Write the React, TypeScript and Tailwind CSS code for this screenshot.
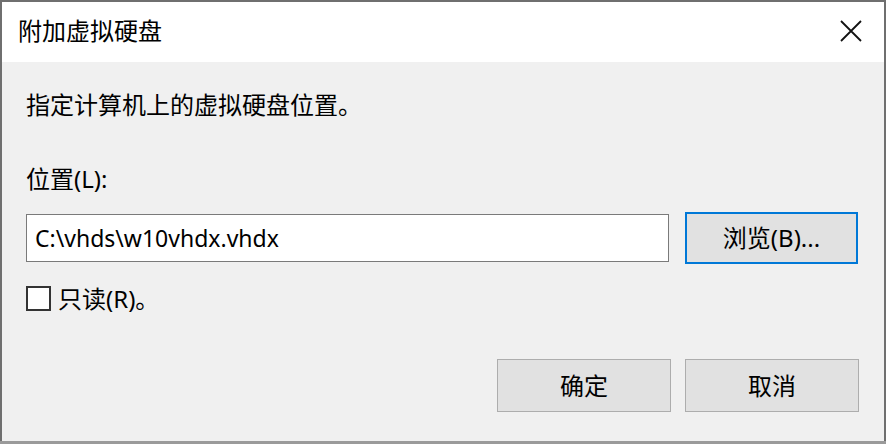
export default function App() {
  const font = { fontFamily: '"Noto Sans", "Noto Sans CJK SC", sans-serif' }
  return (
    <div className="flex h-[444px] w-[886px] flex-col overflow-hidden bg-[#6f6f6f]" style={font}>
      <div className="mx-[2px] mt-[2px] flex h-[439px] flex-col bg-[#f0f0f0] text-black">
        {/* title bar */}
        <div className="flex h-[60px] items-center justify-between bg-white pl-[16px] pr-[22px]">
          <span className="-mt-[2px] text-[24px] leading-[30px]">附加虚拟硬盘</span>
          <svg width="22" height="22" viewBox="0 0 22 22" className="-mt-[3px]">
            <path d="M1 1 L21 21 M21 1 L1 21" stroke="#111" strokeWidth="1.8" fill="none" />
          </svg>
        </div>

        {/* body */}
        <div className="flex flex-col pl-[24px] pr-[25px]">
          <p className="mt-[27px] h-[32px] text-[24px] leading-[32px]">指定计算机上的虚拟硬盘位置。</p>
          <p className="mt-[42px] h-[32px] text-[24px] leading-[32px]">位置(L):</p>

          <div className="mt-[17px] flex h-[52px] items-center gap-[16px]">
            <div className="flex h-[48px] w-[643px] items-center border border-[#7a7a7a] bg-white pl-[8px] text-[23px]">
              C:\vhds\w10vhdx.vhdx
            </div>
            <button className="flex h-[52px] w-[173px] items-center justify-center border-2 border-[#0078d7] bg-[#e1e1e1] text-[24px]">
              浏览(B)...
            </button>
          </div>

          <label className="mt-[22px] flex h-[25px] items-center gap-[7px] text-[24px]">
            <span className="h-[25px] w-[25px] border-2 border-[#333] bg-white" />
            <span className="leading-[32px]">只读(R)。</span>
          </label>

          <div className="mt-[48px] flex justify-end gap-[14px]">
            <button className="flex h-[53px] w-[174px] items-center justify-center border border-[#adadad] bg-[#e1e1e1] text-[24px]">
              确定
            </button>
            <button className="flex h-[53px] w-[174px] items-center justify-center border border-[#adadad] bg-[#e1e1e1] text-[24px]">
              取消
            </button>
          </div>
        </div>
      </div>
      <div className="h-[3px] bg-[#9a9a9a]" />
    </div>
  )
}
